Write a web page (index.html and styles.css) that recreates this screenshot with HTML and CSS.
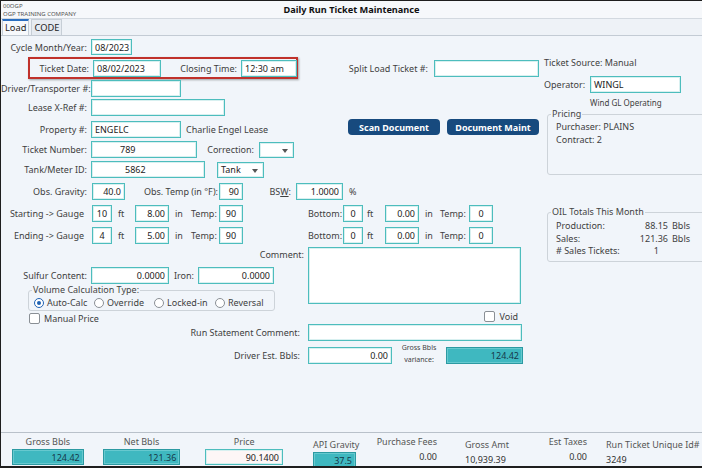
FILE: index.html
```html
<!DOCTYPE html>
<html>
<head>
<meta charset="utf-8">
<title>Daily Run Ticket Maintenance</title>
<link rel="stylesheet" href="styles.css">
</head>
<body>
<div class="window">
  <header class="titlebar">
    <div class="company">
      <div class="co-code">00OGP</div>
      <div class="co-name">OGP TRAINING COMPANY</div>
    </div>
    <div class="title">Daily Run Ticket Maintenance</div>
  </header>
  <nav class="tabs">
    <div class="tab active">Load</div>
    <div class="tab">CODE</div>
  </nav>
  <main class="content">
    <div class="upper">
      <section class="left">
        <div class="row r-cycle">
          <span class="lbl">Cycle Month/Year:</span>
          <div class="field w41">08/2023</div>
        </div>
        <div class="row r-date">
          <div class="highlight">
            <span class="lbl lbl-date">Ticket Date:</span>
            <div class="field w68">08/02/2023</div>
            <span class="lbl lbl-close">Closing Time:</span>
            <div class="field w56">12:30 am</div>
          </div>
          <span class="lbl lbl-split">Split Load Ticket #:</span>
          <div class="field w105"></div>
        </div>
        <div class="row m1">
          <span class="lbl">Driver/Transporter #:</span>
          <div class="field w90"></div>
        </div>
        <div class="row m2">
          <span class="lbl">Lease X-Ref #:</span>
          <div class="field w134"></div>
        </div>
        <div class="row m5">
          <span class="lbl">Property #:</span>
          <div class="field w90">ENGELC</div>
          <span class="txt lease-name">Charlie Engel Lease</span>
          <button class="btn btn-scan">Scan Document</button>
          <button class="btn btn-maint">Document Maint</button>
        </div>
        <div class="row m3">
          <span class="lbl">Ticket Number:</span>
          <div class="field w106 pad-num">789</div>
          <span class="lbl lbl-corr">Correction:</span>
          <div class="field select w35"><span class="caret"></span></div>
        </div>
        <div class="row m3">
          <span class="lbl">Tank/Meter ID:</span>
          <div class="field w114 pad-tank">5862</div>
          <div class="field select w47 sel-tank">Tank<span class="caret"></span></div>
        </div>
        <div class="row m5">
          <span class="lbl lbl-obs">Obs. Gravity:</span>
          <div class="field w33 num">40.0</div>
          <span class="lbl lbl-temp">Obs. Temp (in °F):</span>
          <div class="field w24 num">90</div>
          <span class="lbl lbl-bsw">BS<u>W</u>:</span>
          <div class="field w47 num">1.0000</div>
          <span class="txt pct">%</span>
        </div>
        <div class="gauge m5">
          <span class="lbl-g">Starting -&gt; Gauge</span>
          <div class="field ctr">10</div>
          <span class="unit">ft</span>
          <div class="field num">8.00</div>
          <span class="unit">in</span>
          <span class="txt">Temp:</span>
          <div class="field ctr">90</div>
          <span></span>
          <span class="txt">Bottom:</span>
          <div class="field ctr">0</div>
          <span class="unit u-ft2">ft</span>
          <div class="field num">0.00</div>
          <span class="unit">in</span>
          <span class="txt">Temp:</span>
          <div class="field ctr">0</div>
        </div>
        <div class="gauge m5">
          <span class="lbl-g">Ending -&gt; Gauge</span>
          <div class="field ctr">4</div>
          <span class="unit">ft</span>
          <div class="field num">5.00</div>
          <span class="unit">in</span>
          <span class="txt">Temp:</span>
          <div class="field ctr">90</div>
          <span></span>
          <span class="txt">Bottom:</span>
          <div class="field ctr">0</div>
          <span class="unit u-ft2">ft</span>
          <div class="field num">0.00</div>
          <span class="unit">in</span>
          <span class="txt">Temp:</span>
          <div class="field ctr">0</div>
        </div>
      </section>
      <aside class="right">
        <div class="src">Ticket Source: Manual</div>
        <div class="op-row">
          <span class="txt">Operator:</span>
          <div class="field w91">WINGL</div>
        </div>
        <div class="op-name">Wind GL Operating</div>
        <div class="group pricing">
          <span class="group-title">Pricing</span>
          <div class="gline">Purchaser: PLAINS</div>
          <div class="gline">Contract: 2</div>
        </div>
        <div class="group totals-box">
          <span class="group-title">OIL Totals This Month</span>
          <div class="tline"><span>Production:</span><span class="tv">88.15</span><span class="tu">Bbls</span></div>
          <div class="tline"><span>Sales:</span><span class="tv">121.36</span><span class="tu">Bbls</span></div>
          <div class="tline"><span># Sales Tickets:</span><span class="tv tv-one">1</span></div>
        </div>
      </aside>
    </div>

    <div class="lower">
      <div class="lower-left">
        <div class="cmt-lbl">Comment:</div>
        <div class="row sulfur">
          <span class="lbl lbl-sulf">Sulfur Content:</span>
          <div class="field w78 num">0.0000</div>
          <span class="lbl lbl-iron">Iron:</span>
          <div class="field w76 num">0.0000</div>
        </div>
        <div class="group volume">
          <span class="group-title">Volume Calculation Type:</span>
          <div class="radios">
            <span class="radio on"></span><span class="rtxt r1">Auto-Calc</span>
            <span class="radio"></span><span class="rtxt r2">Override</span>
            <span class="radio"></span><span class="rtxt r3">Locked-in</span>
            <span class="radio"></span><span class="rtxt">Reversal</span>
          </div>
        </div>
        <div class="check-row manual">
          <span class="check"></span><span class="txt">Manual Price</span>
        </div>
      </div>
      <div class="lower-right">
        <div class="comment"></div>
        <div class="check-row void">
          <span class="check"></span><span class="txt">Void</span>
        </div>
      </div>
    </div>

    <div class="row stmt">
      <span class="lbl lbl-wide">Run Statement Comment:</span>
      <div class="field w214"></div>
    </div>
    <div class="row m3">
      <span class="lbl lbl-wide">Driver Est. Bbls:</span>
      <div class="field w84 num">0.00</div>
      <span class="variance-lbl">Gross Bbls<br>variance:</span>
      <div class="field teal w77 num">124.42</div>
    </div>
  </main>

  <footer class="totals">
    <div class="tcol c1"><span class="th">Gross Bbls</span><div class="field teal num">124.42</div></div>
    <div class="tcol c2"><span class="th">Net Bbls</span><div class="field teal num">121.36</div></div>
    <div class="tcol c3"><span class="th">Price</span><div class="field pink num">90.1400</div></div>
    <div class="tcol c4 left"><span class="th">API Gravity</span><div class="field teal num api">37.5</div></div>
    <div class="tcol c5 rt"><span class="th">Purchase Fees</span><span class="tval">0.00</span></div>
    <div class="tcol c6 left"><span class="th">Gross Amt</span><span class="tval">10,939.39</span></div>
    <div class="tcol c7 rt"><span class="th">Est Taxes</span><span class="tval">0.00</span></div>
    <div class="tcol c8 left"><span class="th">Run Ticket Unique Id#</span><span class="tval">3249</span></div>
  </footer>
</div>
</body>
</html>
```

FILE: styles.css
```css
* { box-sizing: border-box; }
html, body { margin: 0; padding: 0; }
body {
  font-family: "Noto Sans", "Open Sans", sans-serif;
  font-size: 9px;
  color: #3e3e3e;
  background: #f1f5fa;
}
.window {
  width: 702px;
  height: 468px;
  border-top: 1px solid #1e1e1e;
  border-left: 1px solid #1e1e1e;
  border-bottom: 2px solid #1e1e1e;
  display: flex;
  flex-direction: column;
  background: #f1f5fa;
  overflow: hidden;
}
.titlebar {
  position: relative;
  height: 18px;
  flex: none;
  background: #f6f8fb;
  border-bottom: 1px solid #d3d9e0;
}
.company { padding: 1px 0 0 2px; line-height: 8px; font-size: 6px; color: #555; }
.title {
  position: absolute;
  left: 0; right: 0; top: 1px;
  text-align: center;
  font-weight: bold;
  font-size: 9.2px;
  color: #111;
  line-height: 16px;
}
.tabs {
  display: flex;
  height: 17px;
  flex: none;
  padding-left: 1px;
  gap: 2px;
  border-bottom: 1px solid #c3cbd4;
  background: #eef2f7;
}
.tab {
  height: 16px;
  padding: 0 2px;
  line-height: 15px;
  font-size: 9.3px;
  color: #222;
  border: 1px solid #c6ced6;
  border-bottom: none;
  background: #e6ebf1;
}
.tab.active {
  background: #f7f9fc;
  border-top: 2px solid #2a6ec0;
  line-height: 14px;
}
.content { display: flex; flex-direction: column; flex: 1; }
.upper { display: flex; height: 207px; flex: none; }
.left { width: 542px; flex: none; padding-top: 3px; }
.right { flex: 1; padding-top: 21px; padding-left: 1px; }

.row { display: flex; align-items: center; }
.m1 { margin-top: 1px; }
.m2 { margin-top: 2px; }
.m3 { margin-top: 3px; }
.m5 { margin-top: 5px; }

.lbl {
  width: 88px;
  flex: none;
  text-align: right;
  padding-right: 2px;
  white-space: nowrap;
  margin-right: 2px;
}
.txt { white-space: nowrap; }

.field {
  height: 17px;
  flex: none;
  display: flex;
  align-items: center;
  padding: 0 3px;
  background: #fff;
  border: 1px solid #4dbdbd;
  box-shadow: inset 0 0 0 1px #d8f0f0;
  color: #222;
  white-space: nowrap;
  overflow: hidden;
}
.num { justify-content: flex-end; }
.ctr { justify-content: center; }
.w24 { width: 24px; }
.w33 { width: 33px; }
.w35 { width: 35px; }
.w41 { width: 41px; }
.w47 { width: 47px; }
.w56 { width: 56px; }
.w68 { width: 68px; }
.w76 { width: 76px; }
.w77 { width: 77px; }
.w78 { width: 78px; }
.w84 { width: 84px; }
.w90 { width: 90px; }
.w91 { width: 91px; }
.w105 { width: 105px; }
.w106 { width: 106px; }
.w114 { width: 114px; }
.w134 { width: 134px; }
.w214 { width: 214px; }
.pad-num { padding-left: 28px; }
.pad-tank { padding-left: 33px; }

.r-cycle .field { height: 16px; }
.r-date { margin-top: 2px; height: 22px; }
.highlight {
  display: flex;
  align-items: center;
  margin-left: 27px;
  width: 270px;
  height: 22px;
  border: 2px solid #c0312b;
  box-shadow: 1px 1px 2px rgba(0,0,0,0.35);
}
.lbl-date { width: 61px; }
.lbl-close { width: 78px; }
.lbl-split { width: 132px; margin-right: 4px; }

.lease-name { margin-left: 5px; }
.btn {
  flex: none;
  align-self: flex-start;
  margin-top: -2px;
  width: 92px;
  height: 16px;
  padding: 0;
  border: none;
  border-radius: 4px;
  background: #174a7e;
  color: #fff;
  font-family: inherit;
  font-size: 9px;
  font-weight: bold;
}
.btn-scan { margin-left: auto; }
.btn-maint { margin-left: 7px; margin-right: 4px; }

.lbl-corr { width: 59px; margin-right: 3px; }
.select { position: relative; justify-content: flex-start; height: 16px; }
.caret {
  position: absolute;
  right: 5px;
  top: 6px;
  width: 0; height: 0;
  border-left: 3.5px solid transparent;
  border-right: 3.5px solid transparent;
  border-top: 4px solid #555;
}
.sel-tank { margin-left: 12px; }

.lbl-obs { margin-right: 3px; }
.lbl-temp { width: 93px; padding-right: 0; margin-right: 1px; }
.lbl-bsw { width: 50px; margin-right: 3px; }
.pct { margin-left: 6px; }

.gauge {
  display: grid;
  grid-template-columns: 91px 20px 23px 34px 22px 28px 24px 65px 35px 20px 22px 34px 21px 29px 24px;
  align-items: center;
  height: 17px;
}
.gauge .field { width: auto; padding: 0 2px; }
.gauge .num { padding-right: 3px; }
.lbl-g { text-align: right; padding-right: 8px; white-space: nowrap; }
.unit { padding-left: 6px; }
.u-ft2 { padding-left: 4px; }

.group {
  position: relative;
  border: 1px solid #cdd3d9;
  border-radius: 3px;
  padding-left: 8px;
}
.group-title {
  position: absolute;
  top: -7px;
  left: 3px;
  padding: 0 1px;
  line-height: 12px;
  background: #f1f5fa;
  color: #444;
  white-space: nowrap;
}
.src { line-height: 12px; }
.op-row { display: flex; align-items: center; margin-top: 7px; }
.op-row .txt { width: 46px; }
.op-name { font-size: 8px; line-height: 11px; margin-top: 4px; padding-left: 46px; }
.pricing { margin: 6px 0 0 3px; width: 158px; height: 61px; padding-top: 5px; }
.gline { line-height: 13px; }
.totals-box { margin: 37px 0 0 3px; width: 158px; height: 50px; padding-top: 7px; }
.tline { display: flex; line-height: 12.5px; }
.tline span:first-child { width: 80px; }
.tv { width: 32px; text-align: right; }
.tu { margin-left: 4px; }
.tv-one { padding-right: 9px; }

.lower { display: flex; margin-top: 4px; }
.lower-left { width: 307px; flex: none; }
.cmt-lbl { text-align: right; padding-right: 4px; line-height: 12px; margin-top: 2px; }
.sulfur { margin-top: 6px; }
.lbl-sulf { width: 90px; padding-right: 4px; margin-right: 0; }
.lbl-iron { width: 29px; padding-right: 4px; margin-right: 0; }
.volume { margin: 6px 0 0 27px; width: 247px; height: 21px; padding: 5px 0 0 5px; }
.radios { display: flex; align-items: center; height: 13px; }
.radio {
  width: 10px; height: 10px;
  flex: none;
  border-radius: 50%;
  border: 1px solid #8a8f95;
  background: #fff;
  position: relative;
}
.radio.on { border-color: #1f62b3; }
.radio.on::after {
  content: "";
  position: absolute;
  left: 2px; top: 2px;
  width: 4px; height: 4px;
  border-radius: 50%;
  background: #1f62b3;
}
.rtxt { margin-left: 3px; white-space: nowrap; }
.r1 { width: 47px; }
.r2 { width: 47px; }
.r3 { width: 48px; }
.check-row { display: flex; align-items: center; height: 12px; }
.check {
  width: 11px; height: 11px;
  flex: none;
  border: 1px solid #8a8f95;
  border-radius: 2px;
  background: #fff;
  margin-right: 4px;
}
.manual { margin-left: 28px; margin-top: 1px; }
.lower-right { width: 214px; }
.comment {
  height: 57px;
  width: 213px;
  background: #fff;
  border: 1px solid #4dbdbd;
  box-shadow: inset 0 0 0 1px #d8f0f0;
}
.void { justify-content: flex-end; margin-top: 6px; padding-right: 4px; }

.lbl-wide { width: 303px; padding-right: 4px; margin-right: 4px; }
.variance-lbl {
  width: 54px;
  text-align: center;
  font-size: 7px;
  line-height: 12px;
  color: #444;
  align-self: flex-start;
  margin-top: -2px;
}
.teal {
  background: #3fb8c0;
  border-color: #2c9aa2;
  box-shadow: inset 0 0 0 1px #66c9cf;
  color: #16384a;
}
.pink { background: #fdf6f6; }

.totals {
  flex: none;
  height: 34px;
  border-top: 1px solid #b9c1ca;
  display: flex;
  padding-left: 11px;
  padding-top: 2px;
}
.tcol { display: flex; flex-direction: column; align-items: center; }
.tcol.left { align-items: flex-start; }
.tcol.rt { align-items: flex-end; }
.th { line-height: 14px; color: #555; white-space: nowrap; }
.tcol .field { width: 100%; height: 16px; }
.tval { line-height: 16px; color: #333; }
.c1 { width: 72px; }
.c2 { width: 78px; margin-left: 19px; }
.c3 { width: 78px; margin-left: 25px; }
.c4 { width: 57px; margin-left: 30px; }
.c4 .api { width: 43px; }
.c5 { width: 57px; margin-left: 10px; }
.c6 { width: 48px; margin-left: 28px; }
.c7 { width: 37px; margin-left: 37px; }
.c8 { width: 96px; margin-left: 19px; }
```
